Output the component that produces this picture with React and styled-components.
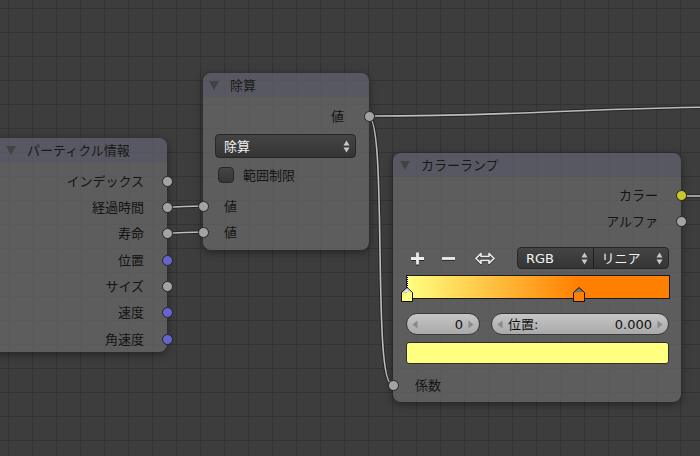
import React from "react";
import styled, { createGlobalStyle } from "styled-components";

const Global = createGlobalStyle`
  html, body { margin: 0; padding: 0; background: #3d3d3d; }
  body { width: 700px; height: 456px; overflow: hidden; }
`;

const Canvas = styled.div`
  position: relative;
  width: 700px;
  height: 456px;
  overflow: hidden;
  background-color: #3d3d3d;
  background-image: linear-gradient(to right, #333333 1px, transparent 1px),
    linear-gradient(to bottom, #333333 1px, transparent 1px);
  background-size: 24px 24px;
  background-position: 8px 8px;
  font-family: "DejaVu Sans", "Noto Sans CJK JP", sans-serif;
  font-size: 13px;
  line-height: 1;
  color: #141414;
`;

const Links = styled.svg`
  position: absolute;
  left: 0;
  top: 0;
  pointer-events: none;
`;

const Node = styled.div`
  position: absolute;
  left: ${(p) => p.$x}px;
  top: ${(p) => p.$y}px;
  width: ${(p) => p.$w}px;
  display: flex;
  flex-direction: column;
  border-radius: 8px;
  box-shadow: 0 2px 8px rgba(0, 0, 0, 0.45);
`;

const Header = styled.div`
  height: ${(p) => p.$h || 24}px;
  flex: none;
  display: flex;
  align-items: center;
  gap: 11px;
  padding-left: ${(p) => p.$pad}px;
  background: rgba(100, 100, 114, 0.7);
  border-radius: 8px 8px 0 0;
`;

const Title = styled.span`
  color: #181818;
  white-space: nowrap;
`;

const Body = styled.div`
  display: flex;
  flex-direction: column;
  padding: ${(p) => p.$pt || 5}px 0 ${(p) => p.$pb || 0}px;
  background: rgba(107, 107, 107, 0.7);
  border-radius: 0 0 8px 8px;
`;

const SocketRow = styled.div`
  position: relative;
  height: ${(p) => p.$h || 26}px;
  flex: none;
  display: flex;
  align-items: center;
  justify-content: ${(p) => (p.$out ? "flex-end" : "flex-start")};
  padding: ${(p) => (p.$out ? `0 ${p.$pad}px 0 0` : `0 0 0 ${p.$pad}px`)};
  margin-top: ${(p) => p.$mt || 0}px;
  white-space: nowrap;
`;

const Socket = styled.span`
  position: absolute;
  top: 50%;
  ${(p) => (p.$out ? "right" : "left")}: -5.5px;
  width: 11px;
  height: 11px;
  margin-top: -5.5px;
  box-sizing: border-box;
  border-radius: 50%;
  background: ${(p) => p.$c};
  border: 1px solid #232323;
  z-index: 2;
`;

const Select = styled.div`
  height: 24px;
  flex: none;
  box-sizing: border-box;
  margin: 5px 13px 0 12px;
  padding: 0 5px 0 8px;
  display: flex;
  align-items: center;
  justify-content: space-between;
  border-radius: 4px;
  border: 1px solid #262626;
  background: linear-gradient(#444444, #353535);
  color: #f2f2f2;
`;

const CheckRow = styled.div`
  height: 26px;
  flex: none;
  margin-top: 4px;
  padding-left: 15px;
  display: flex;
  align-items: center;
  gap: 9px;
`;

const Checkbox = styled.span`
  width: 16px;
  height: 16px;
  box-sizing: border-box;
  border-radius: 4px;
  border: 1px solid #262626;
  background: linear-gradient(#454545, #363636);
`;

const ToolRow = styled.div`
  height: 22px;
  flex: none;
  margin-top: 13px;
  padding: 0 12px 0 13px;
  display: flex;
  align-items: center;
`;

const ToolIcon = styled.span`
  width: 22px;
  height: 22px;
  display: flex;
  align-items: center;
  justify-content: center;
  margin-right: ${(p) => p.$mr || 0}px;
  filter: drop-shadow(0 1px 0 rgba(0, 0, 0, 0.55));
`;

const SegGroup = styled.div`
  margin-left: auto;
  width: 152px;
  height: 22px;
  box-sizing: border-box;
  display: flex;
  border-radius: 4px;
  border: 1px solid #262626;
  background: linear-gradient(#444444, #353535);
  color: #f2f2f2;
  overflow: hidden;
`;

const Seg = styled.div`
  flex: 1;
  display: flex;
  align-items: center;
  justify-content: space-between;
  padding: 0 5px 0 8px;
  border-left: ${(p) => (p.$first ? "none" : "1px solid #1e1e1e")};
`;

const BandWrap = styled.div`
  position: relative;
  height: 24px;
  flex: none;
  margin: 6px 11px 0 13px;
`;

const Band = styled.div`
  height: 100%;
  box-sizing: border-box;
  border: 1px solid #1a1a1a;
  background: linear-gradient(to right, #ffff80 0%, #ff8000 65.5%, #ff8000 100%);
`;

const Marker = styled.span`
  position: absolute;
  top: 12px;
  left: calc(${(p) => p.$pos}% - ${(p) => p.$off}px);
  width: 12px;
  height: 15px;
  display: block;
`;

const DotLine = styled.span`
  position: absolute;
  left: 1px;
  top: 0;
  width: 1px;
  height: 13px;
  background: repeating-linear-gradient(to bottom, #000 0 1px, #fff 1px 2px);
`;

const FieldRow = styled.div`
  height: 22px;
  flex: none;
  margin-top: 14px;
  padding: 0 12px 0 13px;
  display: flex;
  gap: 11px;
`;

const NumField = styled.div`
  ${(p) => (p.$w ? `width: ${p.$w}px;` : "flex: 1;")}
  height: 22px;
  box-sizing: border-box;
  display: flex;
  align-items: center;
  gap: 5px;
  padding: 0 5px;
  border-radius: 11px;
  border: 1px solid #3a3a3a;
  background: linear-gradient(#c6c6c6, #a9a9a9);
  color: #111;
`;

const FieldLabel = styled.span`
  flex: 1;
  text-align: ${(p) => (p.$right ? "right" : "left")};
  white-space: nowrap;
`;

const FieldValue = styled.span`
  white-space: nowrap;
`;

const Swatch = styled.div`
  height: 22px;
  flex: none;
  box-sizing: border-box;
  margin: 7px 12px 0 13px;
  border-radius: 3px;
  border: 1px solid #2e2e2e;
  background: #ffff80;
`;

const Tri = () => (
  <svg width="10" height="9" viewBox="0 0 10 9">
    <path d="M0 0 H10 L5 9 Z" fill="#424242" />
  </svg>
);

const UpDown = () => (
  <svg width="7" height="13" viewBox="0 0 7 13">
    <path d="M0.5 5.5 L3.5 0.5 L6.5 5.5 Z" fill="#c8c8c8" />
    <path d="M0.5 7.5 L3.5 12.5 L6.5 7.5 Z" fill="#c8c8c8" />
  </svg>
);

const Arrow = ({ dir }) => (
  <svg width="6" height="9" viewBox="0 0 6 9">
    <path d={dir === "l" ? "M5.5 0.5 V8.5 L0.5 4.5 Z" : "M0.5 0.5 V8.5 L5.5 4.5 Z"} fill="#8a8a8a" />
  </svg>
);

const MarkerShape = ({ top, fill }) => (
  <svg width="12" height="15" viewBox="0 0 12 15">
    <path d="M0.5 5.5 L6 0.5 L11.5 5.5 Z" fill={top} />
    <rect x="0.5" y="5.5" width="11" height="9" fill={fill} />
    <path d="M0.5 5.5 L6 0.5 L11.5 5.5 V14.5 H0.5 Z" fill="none" stroke="#111" />
  </svg>
);

const Link = ({ d }) => (
  <g>
    <path d={d} fill="none" stroke="rgba(20,20,20,0.55)" strokeWidth="3.6" />
    <path d={d} fill="none" stroke="#bdbdbd" strokeWidth="1.6" />
  </g>
);

const GREY = "#a3a3a3";
const BLUE = "#6565cb";
const YELLOW = "#c9c92a";

const particleOutputs = [
  ["インデックス", GREY],
  ["経過時間", GREY],
  ["寿命", GREY],
  ["位置", BLUE],
  ["サイズ", GREY],
  ["速度", BLUE],
  ["角速度", BLUE],
];

export default function App() {
  return (
    <>
      <Global />
      <Canvas>
        <Links width="700" height="456" viewBox="0 0 700 456">
          <Link d="M167 207 C180 207 189 206 202 206" />
          <Link d="M167 233 C180 233 189 232 202 232" />
          <Link d="M368 116 C520 116 560 109 720 107" />
          <Link d="M368 116 C388 116 372 384 392 384" />
          <Link d="M681 196 L710 196" />
        </Links>

        <Node $x={-14} $y={138} $w={181}>
          <Header $h={25} $pad={20}>
            <Tri />
            <Title>パーティクル情報</Title>
          </Header>
          <Body $pt={5}>
            {particleOutputs.map(([label, c]) => (
              <SocketRow key={label} $out $pad={23} $h={26.33}>
                {label}
                <Socket $out $c={c} />
              </SocketRow>
            ))}
          </Body>
        </Node>

        <Node $x={203} $y={73} $w={166}>
          <Header $pad={6}>
            <Tri />
            <Title>除算</Title>
          </Header>
          <Body $pt={6} $pb={5}>
            <SocketRow $out $pad={25}>
              値
              <Socket $out $c={GREY} />
            </SocketRow>
            <Select>
              <span>除算</span>
              <UpDown />
            </Select>
            <CheckRow>
              <Checkbox />
              <span>範囲制限</span>
            </CheckRow>
            <SocketRow $pad={21} $mt={5}>
              <Socket $c={GREY} />
              値
            </SocketRow>
            <SocketRow $pad={21}>
              <Socket $c={GREY} />
              値
            </SocketRow>
          </Body>
        </Node>

        <Node $x={393} $y={153} $w={288}>
          <Header $pad={7}>
            <Tri />
            <Title>カラーランプ</Title>
          </Header>
          <Body $pt={5} $pb={4}>
            <SocketRow $out $pad={23}>
              カラー
              <Socket $out $c={YELLOW} />
            </SocketRow>
            <SocketRow $out $pad={23}>
              アルファ
              <Socket $out $c={GREY} />
            </SocketRow>
            <ToolRow>
              <ToolIcon $mr={9}>
                <svg width="15" height="15" viewBox="0 0 15 15">
                  <path d="M7.5 1.5 V13.5 M1 7.5 H14" stroke="#ececec" strokeWidth="2.8" />
                </svg>
              </ToolIcon>
              <ToolIcon $mr={15}>
                <svg width="15" height="15" viewBox="0 0 15 15">
                  <path d="M1 7.5 H14" stroke="#ececec" strokeWidth="2.8" />
                </svg>
              </ToolIcon>
              <ToolIcon>
                <svg width="20" height="13" viewBox="0 0 20 13">
                  <path
                    d="M1 6.5 L6 1.5 V4.5 H14 V1.5 L19 6.5 L14 11.5 V8.5 H6 V11.5 Z"
                    fill="none"
                    stroke="#ececec"
                    strokeWidth="1.6"
                    strokeLinejoin="round"
                  />
                </svg>
              </ToolIcon>
              <SegGroup>
                <Seg $first>
                  <span>RGB</span>
                  <UpDown />
                </Seg>
                <Seg>
                  <span>リニア</span>
                  <UpDown />
                </Seg>
              </SegGroup>
            </ToolRow>
            <BandWrap>
              <Band />
              <DotLine />
              <Marker $pos={0} $off={5}>
                <MarkerShape top="#e2e2e2" fill="#ffff80" />
              </Marker>
              <Marker $pos={65.6} $off={6}>
                <MarkerShape top="#767676" fill="#ff8000" />
              </Marker>
            </BandWrap>
            <FieldRow>
              <NumField $w={74}>
                <Arrow dir="l" />
                <FieldLabel $right>0</FieldLabel>
                <Arrow dir="r" />
              </NumField>
              <NumField>
                <Arrow dir="l" />
                <FieldLabel>位置:</FieldLabel>
                <FieldValue>0.000</FieldValue>
                <Arrow dir="r" />
              </NumField>
            </FieldRow>
            <Swatch />
            <SocketRow $pad={22} $mt={8}>
              <Socket $c={GREY} />
              係数
            </SocketRow>
          </Body>
        </Node>
      </Canvas>
    </>
  );
}
